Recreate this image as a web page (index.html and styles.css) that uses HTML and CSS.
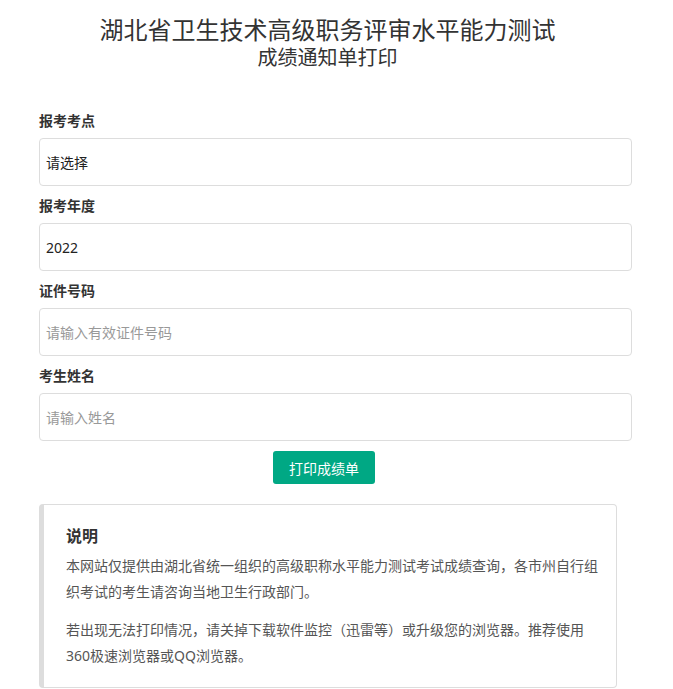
FILE: index.html
```html
<!DOCTYPE html>
<html lang="zh-CN">
<head>
  <meta charset="UTF-8" />
  <meta name="viewport" content="width=device-width, initial-scale=1" />
  <title>成绩通知单打印</title>
  <link rel="stylesheet" href="styles.css">
</head>
<body>
<div class="wrap">
  <header class="head">
    <h1>湖北省卫生技术高级职务评审水平能力测试</h1>
    <h2>成绩通知单打印</h2>
  </header>

  <form class="form" onsubmit="return false">
    <div class="group">
      <label>报考考点</label>
      <select class="control">
        <option>请选择</option>
      </select>
    </div>
    <div class="group">
      <label>报考年度</label>
      <select class="control">
        <option>2022</option>
      </select>
    </div>
    <div class="group">
      <label>证件号码</label>
      <input class="control" type="text" placeholder="请输入有效证件号码">
    </div>
    <div class="group">
      <label>考生姓名</label>
      <input class="control" type="text" placeholder="请输入姓名">
    </div>
    <div class="actions">
      <button class="btn" type="submit">打印成绩单</button>
    </div>
  </form>

  <div class="note">
    <h3>说明</h3>
    <p>本网站仅提供由湖北省统一组织的高级职称水平能力测试考试成绩查询，各市州自行组织考试的考生请咨询当地卫生行政部门。</p>
    <p>若出现无法打印情况，请关掉下载软件监控（迅雷等）或升级您的浏览器。推荐使用360极速浏览器或QQ浏览器。</p>
  </div>
</div>
</body>
</html>
```

FILE: styles.css
```css
* { box-sizing: border-box; }
body {
  margin: 0;
  font-family: "Noto Sans", "Noto Sans CJK SC", sans-serif;
  font-size: 14px;
  color: #333;
  background: #fff;
}
.wrap {
  padding: 0 41px 0 39px;
}
.head {
  text-align: center;
  padding: 15px 16px 0 0;
  margin-bottom: 41px;
}
.head h1 {
  margin: 0;
  font-size: 24px;
  line-height: 30px;
  font-weight: normal;
  color: #333;
}
.head h2 {
  margin: 1px 0 0;
  font-size: 20px;
  line-height: 24px;
  font-weight: normal;
  color: #333;
}
.group {
  margin-bottom: 10px;
}
.group label {
  display: block;
  font-weight: bold;
  line-height: 20px;
  margin-bottom: 7px;
  color: #333;
}
.control {
  display: block;
  width: 100%;
  height: 48px;
  padding: 0 6px;
  font-family: inherit;
  font-size: 14px;
  color: #222;
  background: #fff;
  border: 1px solid #ddd;
  border-radius: 4px;
  outline: none;
  -webkit-appearance: none;
  appearance: none;
}
.control::placeholder {
  color: #999;
}
.actions {
  text-align: center;
  padding-right: 23px;
}
.btn {
  width: 102px;
  height: 33px;
  background: #00a884;
  color: #fff;
  font-family: inherit;
  font-size: 14px;
  border: none;
  border-radius: 3px;
  cursor: pointer;
}
.note {
  margin: 20px 15px 0 0;
  border: 1px solid #ddd;
  border-left: 5px solid #ddd;
  border-radius: 4px;
  padding: 20px 14px 18px 22px;
  color: #555;
}
.note h3 {
  margin: 0 0 6px;
  font-size: 16px;
  line-height: 22px;
  color: #333;
}
.note p {
  margin: 0 0 12px;
  line-height: 26px;
}
.note p:last-child {
  margin-bottom: 0;
}
```
